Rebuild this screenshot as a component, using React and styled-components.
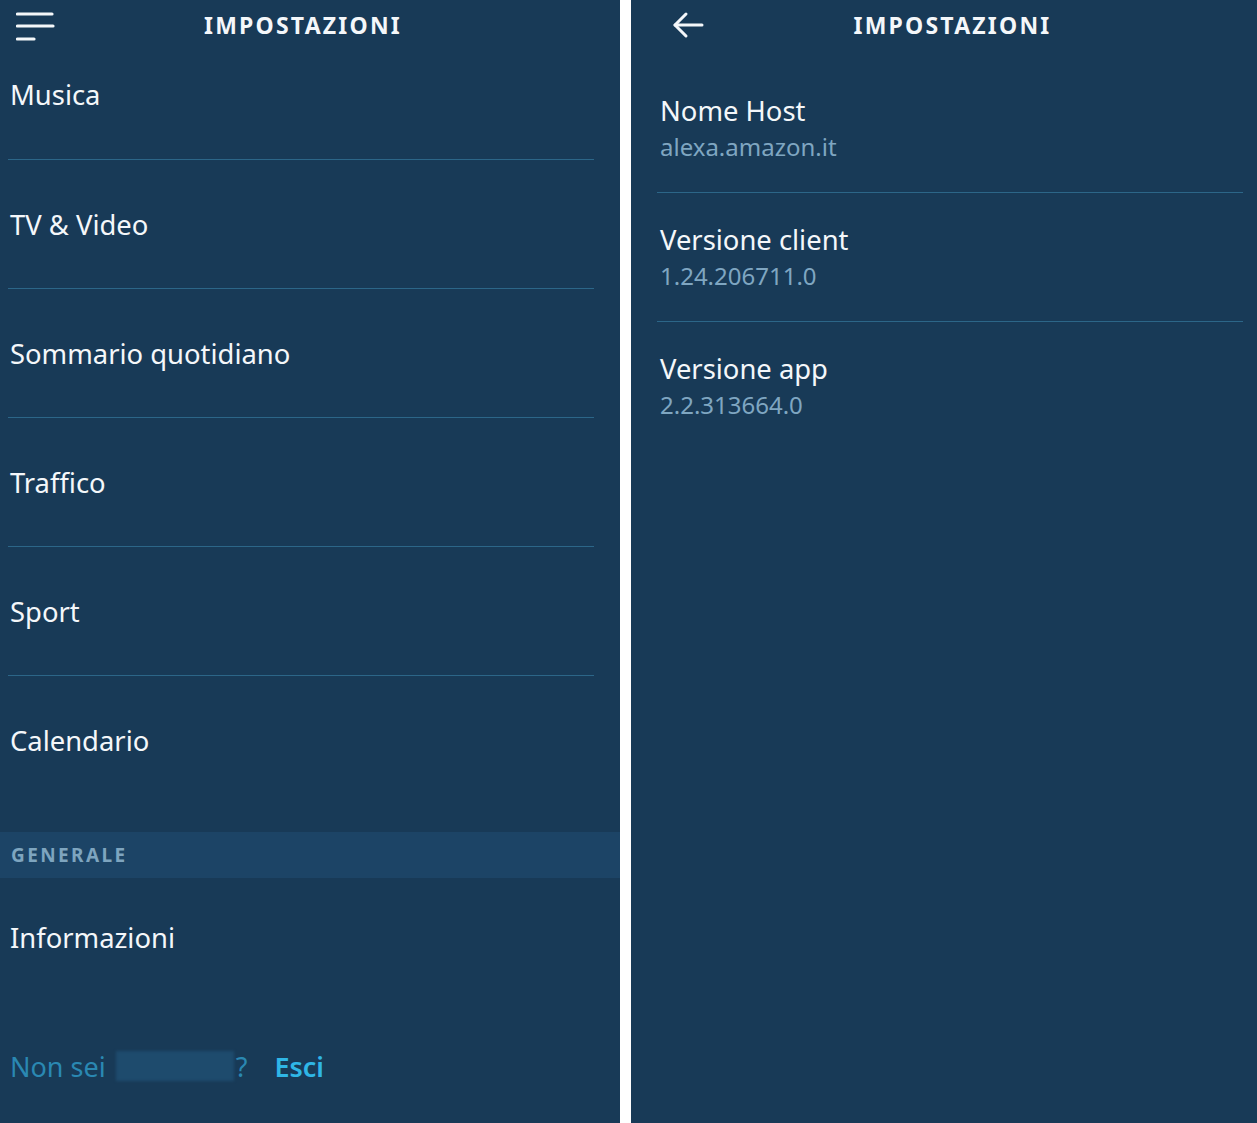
import React from 'react'
import styled, { createGlobalStyle } from 'styled-components'

const NAVY = '#183a57'
const LINE = '#2c6688'

const topics = ['Musica', 'TV & Video', 'Sommario quotidiano', 'Traffico', 'Sport', 'Calendario']

const details = [
  { label: 'Nome Host', value: 'alexa.amazon.it' },
  { label: 'Versione client', value: '1.24.206711.0' },
  { label: 'Versione app', value: '2.2.313664.0' },
]

export default function App() {
  return (
    <>
      <GlobalStyle />
      <Page>
        <Panel $width="620px">
          <TopBar>
            <IconSlot $left="16px">
              <MenuIcon />
            </IconSlot>
            <Title $shift="70px">IMPOSTAZIONI</Title>
          </TopBar>

          {topics.map((topic, i) => (
            <Item key={topic} $first={i === 0} $last={i === topics.length - 1}>
              {topic}
            </Item>
          ))}

          <SectionBand>GENERALE</SectionBand>
          <Item $plain>Informazioni</Item>

          <Footer>
            <Muted>Non sei</Muted>
            <Hidden />
            <Muted>?</Muted>
            <SignOut>Esci</SignOut>
          </Footer>
        </Panel>

        <Panel $gap>
          <TopBar>
            <IconSlot $left="41px">
              <BackIcon />
            </IconSlot>
            <Title $shift="56px">IMPOSTAZIONI</Title>
          </TopBar>

          {details.map((d, i) => (
            <Detail key={d.label} $first={i === 0} $last={i === details.length - 1}>
              <DetailLabel>{d.label}</DetailLabel>
              <DetailValue>{d.value}</DetailValue>
            </Detail>
          ))}
        </Panel>
      </Page>
    </>
  )
}

///////////////////////////////////////////////////////////////////////////////////

function MenuIcon() {
  return (
    <svg width="40" height="32" viewBox="0 0 40 32" aria-hidden="true">
      <g stroke="#f4f7fa" strokeWidth="3.2" strokeLinecap="round">
        <line x1="1.5" y1="3" x2="36" y2="3" />
        <line x1="1.5" y1="15" x2="37" y2="15" />
        <line x1="1.5" y1="28" x2="18" y2="28" />
      </g>
    </svg>
  )
}

function BackIcon() {
  return (
    <svg width="32" height="28" viewBox="0 0 32 28" aria-hidden="true">
      <g stroke="#f4f7fa" strokeWidth="3" fill="none" strokeLinecap="round" strokeLinejoin="round">
        <line x1="3" y1="14" x2="30" y2="14" />
        <polyline points="14,3 3,14 14,25" />
      </g>
    </svg>
  )
}

///////////////////////////////////////////////////////////////////////////////////

const GlobalStyle = createGlobalStyle`
  html, body {
    margin: 0;
    padding: 0;
    background: #ffffff;
  }
  body {
    font-family: "Noto Sans", "Open Sans", sans-serif;
    -webkit-font-smoothing: antialiased;
  }
`

const Page = styled.div`
  display: flex;
  width: 1257px;
  height: 1123px;
  overflow: hidden;
  background: #ffffff;
`

const Panel = styled.div`
  display: flex;
  flex-direction: column;
  width: ${(p) => p.$width || 'auto'};
  flex: ${(p) => (p.$width ? 'none' : '1')};
  margin-left: ${(p) => (p.$gap ? '11px' : '0')};
  background: ${NAVY};
  color: #f4f7fa;
  overflow: hidden;
`

const TopBar = styled.div`
  display: flex;
  align-items: center;
  height: 50px;
  flex: none;
`

const IconSlot = styled.div`
  display: flex;
  align-items: center;
  margin-left: ${(p) => p.$left};
  padding-top: ${(p) => (p.$left === '16px' ? '4px' : '0')};
`

const Title = styled.h1`
  flex: 1;
  margin: 0;
  padding-right: ${(p) => p.$shift};
  text-align: center;
  font-size: 23px;
  font-weight: 700;
  letter-spacing: 2.2px;
  color: #f4f7fa;
`

///////////////////////////////////////////////////////////////////////////////////

const Item = styled.div`
  display: flex;
  align-items: center;
  box-sizing: border-box;
  flex: none;
  height: ${(p) => (p.$first ? '110px' : p.$plain ? '118px' : '129px')};
  margin: 0 26px ${(p) => (p.$last ? '27px' : '0')} 8px;
  padding: 0 0 ${(p) => (p.$first ? '21px' : '0')} 2px;
  border-bottom: ${(p) => (p.$last || p.$plain ? 'none' : `1px solid ${LINE}`)};
  font-size: 27.4px;
  color: #f4f7fa;
`

const SectionBand = styled.div`
  display: flex;
  align-items: center;
  height: 46px;
  flex: none;
  padding-left: 11px;
  background: #1c4466;
  font-size: 19px;
  font-weight: 700;
  letter-spacing: 2.4px;
  color: #7ea5bf;
`

const Footer = styled.div`
  display: flex;
  align-items: center;
  height: 140px;
  flex: none;
  padding-left: 10px;
  font-size: 27px;
`

const Muted = styled.span`
  color: #2a88b2;
`

const Hidden = styled.span`
  display: inline-block;
  width: 118px;
  height: 30px;
  margin: 0 2px 0 10px;
  background: #1e4b6d;
  filter: blur(1.5px);
`

const SignOut = styled.span`
  margin-left: 27px;
  font-weight: 600;
  color: #2fb6e6;
`

///////////////////////////////////////////////////////////////////////////////////

const Detail = styled.div`
  display: flex;
  flex-direction: column;
  gap: 4px;
  box-sizing: border-box;
  flex: none;
  height: ${(p) => (p.$first ? '143px' : '129px')};
  margin: 0 14px 0 26px;
  padding: ${(p) => (p.$first ? '44px' : '30px')} 0 0 3px;
  border-bottom: ${(p) => (p.$last ? 'none' : `1px solid ${LINE}`)};
`

const DetailLabel = styled.div`
  font-size: 27.4px;
  line-height: 34px;
  color: #f4f7fa;
`

const DetailValue = styled.div`
  font-size: 24px;
  line-height: 30px;
  color: #7fa6c1;
`
